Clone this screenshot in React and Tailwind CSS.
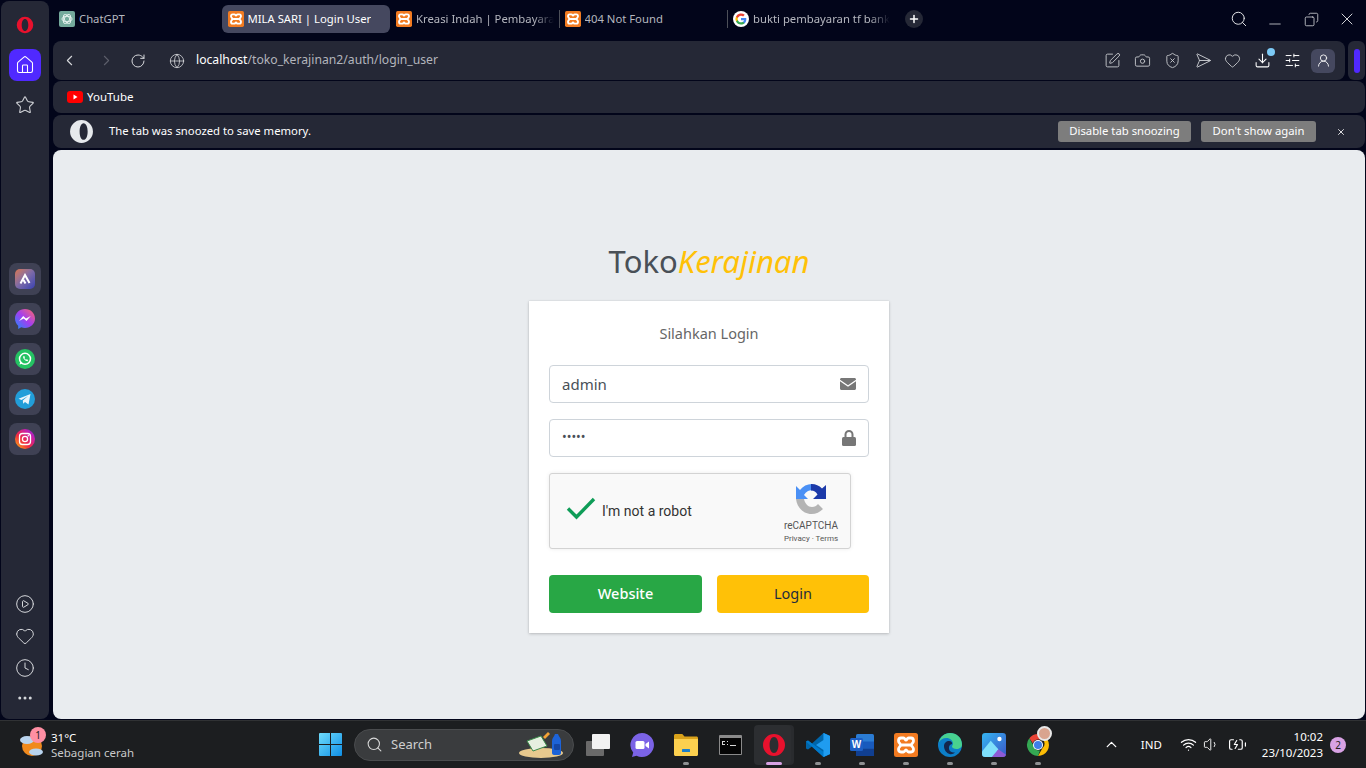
import React from 'react';
import {
  ChevronLeft, ChevronRight, RotateCw, Globe, Plus, Search, Minus, X, Copy, Camera, ShieldX, Send,
  Heart, Download, SlidersHorizontal, UserRound, Home, Star, CirclePlay, Clock, ChevronUp, Wifi,
  Volume1, BatteryCharging, Ellipsis, SquarePen,
} from 'lucide-react';

const uiFont = "font-['Noto_Sans',sans-serif]";

const OperaLogo = ({ size = 16, color = '#e8112d' }) => (
  <svg width={size} height={size} viewBox="0 0 24 24">
    <path fill={color} fillRule="evenodd" d="M12 1a11 11 0 1 0 0 22a11 11 0 0 0 0-22zm0 3c-2.600 0-4.400 3.500-4.400 8s1.800 8 4.400 8s4.400-3.500 4.400-8s-1.800-8-4.400-8z" />
  </svg>
);

const XamppIcon = ({ size = 16 }) => (
  <svg width={size} height={size} viewBox="0 0 24 24">
    <rect width="24" height="24" rx="2.500" fill="#f27b21" />
    <path fill="none" stroke="#fff" strokeWidth="2.800" d="M7 5h2.500c1.500 0 1.500 2 2.500 2s1-2 2.500-2H17c2 0 2.500 1.500 2.500 3s-1.500 2.500-2.500 4c1 1.500 2.500 2.500 2.500 4s-.5 3-2.500 3h-2.500c-1.500 0-1.500-2-2.500-2s-1 2-2.500 2H7c-2 0-2.500-1.500-2.500-3s1.500-2.500 2.500-4c-1-1.500-2.500-2.500-2.500-4S5 5 7 5zM8 12h8" />
  </svg>
);

const GoogleIcon = () => (
  <svg width="16" height="16" viewBox="0 0 24 24">
    <circle cx="12" cy="12" r="12" fill="#fff" />
    <path fill="#4285f4" d="M20 12.200c0-.6-.05-1.200-.15-1.700H12v3.200h4.500a3.900 3.900 0 0 1-1.650 2.500v2.100h2.700c1.550-1.450 2.450-3.550 2.450-6.100z" />
    <path fill="#34a853" d="M12 20.300c2.250 0 4.100-.75 5.550-2l-2.700-2.100c-.75.500-1.700.8-2.850.8c-2.200 0-4-1.450-4.700-3.450H4.500v2.150a8.300 8.300 0 0 0 7.500 4.600z" />
    <path fill="#fbbc05" d="M7.300 13.550a5 5 0 0 1 0-3.100V8.300H4.500a8.300 8.300 0 0 0 0 7.400z" />
    <path fill="#ea4335" d="M12 6.950c1.250 0 2.350.45 3.200 1.250l2.400-2.400A8.300 8.300 0 0 0 4.500 8.300l2.800 2.150c.7-2 2.500-3.500 4.700-3.500z" />
  </svg>
);

const ChatGptIcon = () => (
  <svg width="16" height="16" viewBox="0 0 24 24">
    <rect width="24" height="24" rx="3" fill="#74aa9c" />
    <g fill="none" stroke="#e6f2ef" strokeWidth="1.400">
      <ellipse cx="12" cy="12" rx="7.500" ry="4" />
      <ellipse cx="12" cy="12" rx="7.500" ry="4" transform="rotate(60 12 12)" />
      <ellipse cx="12" cy="12" rx="7.500" ry="4" transform="rotate(120 12 12)" />
    </g>
  </svg>
);

const Tab = ({ icon, title, active, fade, divider }) => (
  <div className={`relative w-[168.5px] h-[28px] flex items-center shrink-0 rounded-md pl-[6px] pr-[5px] gap-[4px] ${active ? 'bg-[#45485f] text-white' : 'text-[#b5b7bf]'}`}>
    {divider && <span className="absolute left-0 top-[5px] h-[18px] w-px bg-[#4d5059]" />}
    <span className="shrink-0">{icon}</span>
    <span className={`text-[11.3px] whitespace-nowrap overflow-hidden ${fade ? '[mask-image:linear-gradient(to_right,black_85%,transparent)]' : ''}`}>{title}</span>
  </div>
);

const AppButton = ({ children }) => (
  <div className="w-8 h-8 rounded-lg bg-[#3f4154] flex items-center justify-center">{children}</div>
);

const Sidebar = () => (
  <aside className="w-[48px] ml-px mt-px h-[718px] bg-[#252836] rounded-lg flex flex-col items-center shrink-0">
    <div className="mt-[15px]"><OperaLogo size={18} /></div>
    <div className="mt-[15px] w-8 h-8 rounded-lg bg-[#5029ff] flex items-center justify-center">
      <Home size={20} strokeWidth={1.300} color="#fff" />
    </div>
    <Star size={20} strokeWidth={1.300} color="#cfd1d6" className="mt-[14px]" />
    <div className="mt-[148px] flex flex-col gap-2">
      <AppButton>
        <div className="w-5 h-5 rounded-[5px] bg-gradient-to-br from-[#d9744a] via-[#7d6aa8] to-[#3a3fb0] flex items-center justify-center">
          <svg width="12" height="12" viewBox="0 0 12 12"><path d="M1.500 10.500 6 2l4.500 8M4.500 7l2 3.500" fill="none" stroke="#fff" strokeWidth="2" /></svg>
        </div>
      </AppButton>
      <AppButton>
        <svg width="20" height="20" viewBox="0 0 20 20">
          <defs><linearGradient id="ms" x1="0" y1="1" x2="1" y2="0"><stop offset="0" stopColor="#1d8cff" /><stop offset="0.500" stopColor="#a33df0" /><stop offset="1" stopColor="#ff6a68" /></linearGradient></defs>
          <path fill="url(#ms)" d="M10 0C4.400 0 0 4.100 0 9.600c0 2.900 1.200 5.400 3.200 7.100V20l3-1.700c1.200.4 2.500.6 3.800.6c5.600 0 10-4.100 10-9.400S15.600 0 10 0z" />
          <path fill="#fff" d="m4 12 4.200-5 2.800 2.400L15.800 7l-4.300 5-2.800-2.400z" />
        </svg>
      </AppButton>
      <AppButton>
        <svg width="20" height="20" viewBox="0 0 20 20">
          <circle cx="10" cy="10" r="10" fill="#25c363" />
          <circle cx="10" cy="9.800" r="5.500" fill="none" stroke="#fff" strokeWidth="1.500" />
          <path d="m4.500 15.500 1-3.500 2.500 2.500z" fill="#fff" />
          <path d="M8 7.500c0 2.200 2 4.500 4.500 4.800l.7-1.300-1.500-.8-.7.6c-.8-.4-1.300-1-1.600-1.700l.6-.7L9.300 7z" fill="#fff" />
        </svg>
      </AppButton>
      <AppButton>
        <svg width="20" height="20" viewBox="0 0 20 20">
          <circle cx="10" cy="10" r="10" fill="#229ed9" />
          <path fill="#eaf5fb" d="M3.500 9.800 15.500 5l-2 10.500-3.500-2.600-1.800 1.800-.4-3.200 5.200-4.600-6.500 4z" />
        </svg>
      </AppButton>
      <AppButton>
        <svg width="20" height="20" viewBox="0 0 20 20">
          <defs><linearGradient id="ig" x1="0" y1="1" x2="1" y2="0"><stop offset="0" stopColor="#fdc20f" /><stop offset="0.400" stopColor="#f0293f" /><stop offset="0.750" stopColor="#c41fb0" /><stop offset="1" stopColor="#6a34d8" /></linearGradient></defs>
          <circle cx="10" cy="10" r="10" fill="url(#ig)" />
          <rect x="4.500" y="4.500" width="11" height="11" rx="3" fill="none" stroke="#fff" strokeWidth="1.300" />
          <circle cx="10" cy="10" r="2.600" fill="none" stroke="#fff" strokeWidth="1.300" />
          <circle cx="13.300" cy="6.700" r=".8" fill="#fff" />
        </svg>
      </AppButton>
    </div>
    <div className="mt-auto mb-[12px] flex flex-col items-center gap-[12px] text-[#d5d7db]">
      <CirclePlay size={20} strokeWidth={1.200} />
      <Heart size={20} strokeWidth={1.200} />
      <Clock size={20} strokeWidth={1.200} />
      <Ellipsis size={18} strokeWidth={2} className="-mt-[1px]" />
    </div>
  </aside>
);

const TabStrip = () => (
  <div className="h-[41px] flex items-start text-[#c9cace]">
    <div className="flex items-center mt-[5px]">
      <Tab icon={<ChatGptIcon />} title="ChatGPT" />
      <Tab icon={<XamppIcon />} title="MILA SARI | Login User" active />
      <Tab icon={<XamppIcon />} title="Kreasi Indah | Pembayaran" fade />
      <Tab icon={<XamppIcon />} title="404 Not Found" divider />
      <Tab icon={<GoogleIcon />} title="bukti pembayaran tf bank" fade divider />
      <div className="w-[18px] h-[18px] ml-[9px] rounded-full bg-[#252836] flex items-center justify-center">
        <Plus size={12} strokeWidth={3} color="#fff" />
      </div>
    </div>
    <div className="ml-auto mr-px mt-[9px] flex items-center text-[#e4e5e8]">
      <span className="w-9 flex justify-center"><Search size={18} strokeWidth={1.300} /></span>
      <span className="w-9 flex justify-center"><Minus size={18} strokeWidth={1} className="translate-y-[5px]" /></span>
      <span className="w-9 flex justify-center"><Copy size={15} strokeWidth={1.200} className="-scale-x-100" /></span>
      <span className="w-9 flex justify-center"><X size={20} strokeWidth={1.100} /></span>
    </div>
  </div>
);

const AddressBar = () => (
  <div className="h-[39px] flex gap-[3px]">
    <div className="flex-1 bg-[#252836] rounded-lg flex items-center text-[#d7d8dc]">
      <ChevronLeft size={17} strokeWidth={1.500} className="ml-[8px]" />
      <ChevronRight size={17} strokeWidth={1.500} className="ml-[20px] text-[#5d5f6b]" />
      <RotateCw size={16} strokeWidth={1.500} className="ml-[15px]" />
      <Globe size={16} strokeWidth={1.200} className="ml-[23px]" />
      <span className="ml-[11px] text-[12.2px]"><span className="text-white">localhost</span><span className="text-[#b3b5bc]">/toko_kerajinan2/auth/login_user</span></span>
      <div className="ml-auto mr-[10px] flex items-center gap-[13px] text-[#c6c8cd]">
        <SquarePen size={17} strokeWidth={1.300} />
        <Camera size={17} strokeWidth={1.300} />
        <ShieldX size={17} strokeWidth={1.300} />
        <Send size={17} strokeWidth={1.300} className="rotate-45 -translate-x-[2px]" />
        <Heart size={17} strokeWidth={1.300} />
        <span className="relative text-white">
          <Download size={17} strokeWidth={1.500} />
          <span className="absolute -top-[4px] -right-[4px] w-2 h-2 rounded-full bg-[#7cc9f5]" />
        </span>
        <SlidersHorizontal size={17} strokeWidth={1.400} color="#fff" />
        <span className="w-6 h-6 -ml-[3px] rounded-md bg-[#45485f] flex items-center justify-center text-white">
          <UserRound size={15} strokeWidth={1.400} />
        </span>
      </div>
    </div>
    <div className="w-[17px] bg-[#252836] rounded-md mr-px flex items-center justify-center">
      <span className="w-[6px] h-6 rounded-full bg-[#5029ff]" />
    </div>
  </div>
);

const InfoBar = () => (
  <div className="h-[33px] mt-[2px] mr-px bg-[#252836] rounded-lg flex items-center text-white">
    <svg width="25" height="25" viewBox="0 0 24 24" className="ml-[16px]">
      <path fill="#e6e9ec" fillRule="evenodd" d="M12 1a11 11 0 1 0 0 22a11 11 0 0 0 0-22zm2 3c-2.400 0-3.800 3.500-3.800 8s1.400 8 3.800 8s3.900-3.500 3.900-8s-1.500-8-3.900-8z" />
    </svg>
    <span className="ml-[15px] text-[11.3px]">The tab was snoozed to save memory.</span>
    <button className="ml-auto h-[21px] w-[133px] rounded-[3px] bg-[#7d7d7d] text-[11.3px]">Disable tab snoozing</button>
    <button className="ml-[10px] h-[21px] w-[115px] rounded-[3px] bg-[#7d7d7d] text-[11.3px]">Don't show again</button>
    <X size={10} strokeWidth={2} className="ml-[20px] mr-[19px]" />
  </div>
);

const MailIcon = () => (
  <svg width="16" height="12" viewBox="0 0 16 12">
    <path fill="#777" d="M1.500 0h13C15.300 0 16 .7 16 1.500v.3L8 7.300 0 1.800v-.3C0 .7.700 0 1.500 0zM0 3.300l8 5.400 8-5.400v7.200c0 .8-.7 1.500-1.500 1.500h-13C.700 12 0 11.300 0 10.500z" />
  </svg>
);

const LockIcon = () => (
  <svg width="14" height="16" viewBox="0 0 14 16">
    <path fill="none" stroke="#777" strokeWidth="2" d="M3.500 7V4.500a3.500 3.500 0 0 1 7 0V7" />
    <rect y="7" width="14" height="9" rx="1.500" fill="#777" />
  </svg>
);

const Field = ({ value, icon, dots }) => (
  <div className="h-[38px] border border-[#ced4da] rounded flex items-center pl-3 pr-[12px] mb-4">
    <span className={`flex-1 text-[#495057] ${dots ? 'text-[12.5px] -mt-[1px]' : 'text-[15px]'}`}>{value}</span>
    {icon}
  </div>
);

const Recaptcha = () => (
  <div className="w-[302px] h-[76px] border border-[#d3d3d3] rounded-[3px] bg-[#f9f9f9] shadow-[0_0_4px_rgba(0,0,0,0.08)] flex font-['Roboto',sans-serif]">
    <div className="flex items-center flex-1">
      <svg width="30" height="24" viewBox="0 0 30 24" className="ml-[16px] -translate-y-[3px]">
        <path d="M2 12.500 10.500 21 28 3" fill="none" stroke="#0f9d58" strokeWidth="3.400" />
      </svg>
      <span className="ml-[6px] text-[14px] text-[#333]">I'm not a robot</span>
    </div>
    <div className="w-[72px] mr-[3px] flex flex-col items-center pt-[10px]">
      <svg width="30" height="30" viewBox="0 0 30 30">
        <path fill="#4a90f5" d="M16 0A15 15 0 0 0 4 6L0 2v13h12l-4-4a9 9 0 0 1 4-4c2-.8 3-1 4-.5z" />
        <path fill="#1c3aa9" d="M15 0a15 15 0 0 1 11 4.500L30 1v14H17l4.500-4.500C20 8 18 6.500 15 6.500z" />
        <path fill="#b4b4b4" d="M0 15h8c1 4.500 4 8 8 8c2.500 0 4.500-1 6-3l5 5c-3 3-7 5-11.500 5C7.500 30 1 23.500 0 15z" />
      </svg>
      <span className="text-[10px] leading-none text-[#555] mt-[7px]">reCAPTCHA</span>
      <span className="text-[8px] leading-none text-[#555] mt-[4px] whitespace-nowrap">Privacy · Terms</span>
    </div>
  </div>
);

const LoginPage = () => (
  <main className="flex-1 mt-[2px] mr-px mb-px bg-[#e9ecef] rounded-lg flex flex-col items-center pt-[90px] font-['Noto_Sans',sans-serif]">
    <h1 className="h-[42px] text-[31px] leading-[42px] text-[#495057]">Toko<i className="text-[#ffc107]">Kerajinan</i></h1>
    <div className="mt-[19px] w-[360px] bg-white shadow-[0_0_1px_rgba(0,0,0,0.125),0_1px_3px_rgba(0,0,0,0.2)] p-5">
      <p className="text-center text-[14.5px] leading-[24px] text-[#666] mb-5">Silahkan Login</p>
      <Field value="admin" icon={<MailIcon />} />
      <Field value="•••••" dots icon={<LockIcon />} />
      <Recaptcha />
      <div className="flex justify-between mt-[26px]">
        <button className="w-[153px] h-[38px] rounded bg-[#28a745] text-white text-[14.5px] font-medium">Website</button>
        <button className="w-[152px] h-[38px] rounded bg-[#ffc107] text-[#1f2d3d] text-[14.5px]">Login</button>
      </div>
    </div>
  </main>
);

const WeatherIcon = () => (
  <div className="relative w-6 h-[24px]">
    <svg width="24" height="24" viewBox="0 0 24 24">
      <circle cx="13" cy="13" r="10" fill="#f08a1d" />
      <ellipse cx="8" cy="7" rx="7" ry="4" fill="#b9d4ee" />
      <ellipse cx="17" cy="19" rx="7" ry="3.500" fill="#b9d4ee" />
    </svg>
    <span className="absolute -top-[6px] left-[11px] w-4 h-4 rounded-full bg-[#ff8fa3] text-[#222] text-[10px] leading-4 text-center">1</span>
  </div>
);

const TaskIcon = ({ children, dot, active }) => (
  <div className="relative w-[44px] h-[40px] flex items-center justify-center">
    {active && <span className="absolute left-[2px] top-0 w-[37px] h-[40px] rounded bg-[#2c2e31] shadow-[3px_0_0_#292b2e]" />}
    <span className="relative">{children}</span>
    {dot && <span className="absolute bottom-0 left-[19px] w-[6px] h-[3px] rounded-full bg-[#8f9193]" />}
    {active && <span className="absolute bottom-0 left-[14px] w-[16px] h-[3px] rounded-full bg-[#d8a2e4]" />}
  </div>
);

const Taskbar = () => (
  <footer className="relative h-[48px] bg-[#1c1e20] border-t border-[#303234] flex items-center shrink-0 text-white">
    <div className="w-[308px] flex items-center pl-[19px] gap-[8px] shrink-0">
      <WeatherIcon />
      <div className="text-[11.5px] leading-[15px]">
        <div>31°C</div>
        <div className="text-[#c8c9ca]">Sebagian cerah</div>
      </div>
    </div>
    <div className="w-[44px] flex justify-center">
      <svg width="23" height="23" viewBox="0 0 23 23">
        <defs><linearGradient id="win" x1="0" y1="0" x2="1" y2="1"><stop offset="0" stopColor="#6fdcfb" /><stop offset="1" stopColor="#0f8fe6" /></linearGradient></defs>
        <path fill="url(#win)" d="M0 1a1 1 0 0 1 1-1h10v11H0zM12 0h10a1 1 0 0 1 1 1v10H12zM0 12h11v11H1a1 1 0 0 1-1-1zM12 12h11v10a1 1 0 0 1-1 1H12z" />
      </svg>
    </div>
    <div className="ml-[2px] w-[220px] h-[32px] rounded-full bg-[#3a3c3e] border border-[#4a4c4e] flex items-center pl-[11px] relative">
      <Search size={17} strokeWidth={1.500} color="#d8d8d8" />
      <span className="ml-[8px] text-[13px] text-[#cfcfcf]">Search</span>
      <svg width="52" height="30" viewBox="0 0 52 30" className="absolute right-[2px] -top-[1px]">
        <ellipse cx="22" cy="24" rx="22" ry="5" fill="#e8c98e" />
        <path d="m8 12 14-5 6 10-14 5z" fill="#e6efe0" stroke="#3b8b4a" />
        <path d="m24 8 5-5 2 2-5 5z" fill="#f4a235" />
        <path d="M33 12c0-3 2-4 3-7h3c1 3 3 4 3 7v12c0 1-1 2-2 2h-5c-1 0-2-1-2-2z" fill="#1d63d8" />
        <rect x="35" y="15" width="6" height="6" rx="1" fill="#1547a6" />
      </svg>
    </div>
    <div className="ml-[2px] flex items-center">
      <TaskIcon>
        <svg width="24" height="22" viewBox="0 0 24 22">
          <rect y="7" width="18" height="15" rx="1" fill="#6a6a6a" />
          <rect x="6" width="18" height="15" rx="1" fill="#f2f2f2" />
        </svg>
      </TaskIcon>
      <TaskIcon>
        <svg width="24" height="24" viewBox="0 0 24 24">
          <path fill="#7b63e6" d="M12 0a12 12 0 1 1-5.500 22.700L2 24l1.200-4.400A12 12 0 0 1 12 0z" />
          <rect x="5.500" y="8" width="9" height="8" rx="1.500" fill="#fff" />
          <path fill="#fff" d="m15.500 11 3.500-2.500v7L15.500 13z" />
        </svg>
      </TaskIcon>
      <TaskIcon dot>
        <svg width="24" height="22" viewBox="0 0 24 22">
          <path fill="#d9a21b" d="M0 1.500C0 .7.700 0 1.500 0h6.800l2.200 2.500h12c.8 0 1.500.7 1.500 1.500v3H0z" />
          <path fill="#fcd04f" d="M0 5h24v15.500c0 .8-.7 1.500-1.500 1.500h-21C.700 22 0 21.300 0 20.500z" />
          <rect x="8" y="15" width="8" height="3" rx=".5" fill="#1d7fc9" />
        </svg>
      </TaskIcon>
      <TaskIcon>
        <svg width="23" height="20" viewBox="0 0 23 20">
          <rect width="23" height="20" rx="1" fill="#8a8a8a" />
          <rect x="1" y="3" width="21" height="16" fill="#050505" />
          <path d="M3 6h3v1H4v2h2v1H3zM8 6h1v1H8zM8 9h1v1H8zM11 10h6v1h-6z" fill="#d8d8d8" />
        </svg>
      </TaskIcon>
      <TaskIcon active><OperaLogo size={24} /></TaskIcon>
      <TaskIcon dot>
        <svg width="24" height="24" viewBox="0 0 24 24">
          <path fill="#0065a9" d="M17.500 0 24 3v18l-6.500 3L6 13.500 2 16.500 0 15.500v-7l2-1 4 3z" />
          <path fill="#007acc" d="M17.500 0 24 3v18l-6.500 3zM0 8.500l2-1L17.500 19v5L0 8.500z" />
          <path fill="#1f9cf0" d="M17.500 0 24 3v18l-6.500 3V17L10 12l7.500-5z" />
        </svg>
      </TaskIcon>
      <TaskIcon dot>
        <svg width="24" height="22" viewBox="0 0 24 22">
          <rect x="6" width="18" height="22" rx="1.500" fill="#2b7cd3" />
          <rect x="6" y="7.500" width="18" height="7" fill="#185abd" />
          <rect x="6" y="14.500" width="18" height="7.500" fill="#103f91" />
          <rect y="4" width="13" height="13" rx="1.500" fill="#1c5fc5" />
          <text x="6.500" y="14" fontSize="10" fontWeight="700" fill="#fff" textAnchor="middle" fontFamily="Liberation Sans, sans-serif">W</text>
        </svg>
      </TaskIcon>
      <TaskIcon dot><XamppIcon size={24} /></TaskIcon>
      <TaskIcon dot>
        <svg width="24" height="24" viewBox="0 0 24 24">
          <circle cx="12" cy="12" r="12" fill="#0c7fc9" />
          <path fill="#48d18f" d="M12 0c6.600 0 12 4.500 12 11.500c0 2.800-2.400 4.500-5.500 4.500c-2.500 0-4.500-.9-4.500-2.500c0-1 1-1.300 1-3c0-3-3-5.500-6.500-5.500C5 5 2 7 .8 9.500C2 4 6.500 0 12 0z" />
          <path fill="#14264d" d="M6 13c0-3 2.500-5 5-5s3.500 1.700 3 3c-2 .5-3.500 2-3 5c.4 2.500 3 4 6 3.500c-1.500 1.500-3.500 2-5.500 1.500C8.500 20 6 17 6 13z" />
        </svg>
      </TaskIcon>
      <TaskIcon dot>
        <svg width="24" height="24" viewBox="0 0 22 22">
          <defs><linearGradient id="ph" x1="0" y1="0" x2="1" y2="1"><stop offset="0" stopColor="#35b6f2" /><stop offset="1" stopColor="#3a56c8" /></linearGradient></defs>
          <rect width="22" height="22" rx="3" fill="url(#ph)" />
          <circle cx="16" cy="5.500" r="2" fill="#fff" />
          <path fill="#7fe0fb" d="M0 17 8 7l7 8 -4 7H3a3 3 0 0 1-3-3z" />
          <path fill="#8e5bd6" d="m9 22 6-7 7 5v-1a3 3 0 0 1-3 3z" />
        </svg>
      </TaskIcon>
      <TaskIcon dot>
        <svg width="24" height="24" viewBox="0 0 24 24">
          <path fill="#ea4335" d="M12 1a11 11 0 0 1 9.500 5.500H12a5.500 5.500 0 0 0-5.200 3.700L3.300 5.300A11 11 0 0 1 12 1z" />
          <path fill="#fbbc05" d="M21.500 6.500A11 11 0 0 1 12 23l4.700-8.200a5.500 5.500 0 0 0 0-8.300z" />
          <path fill="#34a853" d="M3.300 5.300 8 13.500a5.500 5.500 0 0 0 6 3.900L12 23A11 11 0 0 1 3.300 5.300z" />
          <circle cx="12" cy="12" r="5" fill="#fff" />
          <circle cx="12" cy="12" r="4" fill="#3f7fe8" />
        </svg>
        <span className="absolute -top-[7px] left-[11px] w-[15px] h-[15px] rounded-full bg-[#d9a48f] border-2 border-[#e8e8e8]" />
      </TaskIcon>
    </div>
    <div className="ml-auto flex items-center pr-[20px]">
      <ChevronUp size={17} strokeWidth={1.800} />
      <span className="ml-[21px] text-[11.5px]">IND</span>
      <Wifi size={17} strokeWidth={1.700} className="ml-[18px]" />
      <Volume1 size={17} strokeWidth={1.300} className="ml-[6px]" />
      <BatteryCharging size={19} strokeWidth={1.500} className="ml-[8px]" />
      <div className="ml-[15px] text-right text-[11.5px] leading-[16px]">
        <div>10:02</div>
        <div>23/10/2023</div>
      </div>
      <span className="ml-[7px] w-4 h-4 rounded-full bg-[#d8a2e4] text-[#222] text-[10px] leading-4 text-center">2</span>
    </div>
  </footer>
);

export default function App() {
  return (
    <div className={`w-[1366px] h-[768px] overflow-hidden bg-[#02051a] flex flex-col ${uiFont}`}>
      <div className="flex-1 flex min-h-0">
        <Sidebar />
        <div className="flex-1 min-w-0 flex flex-col ml-[4px]">
          <TabStrip />
          <AddressBar />
          <div className="h-[32px] mt-px mr-px bg-[#252836] rounded-lg flex items-center pl-[14px] text-[11.5px] text-white">
            <svg width="16" height="12" viewBox="0 0 16 12"><rect width="16" height="12" rx="3" fill="#f00" /><path d="m6.500 3.500 4 2.500-4 2.500z" fill="#fff" /></svg>
            <span className="ml-1">YouTube</span>
          </div>
          <InfoBar />
          <LoginPage />
        </div>
      </div>
      <Taskbar />
    </div>
  );
}
